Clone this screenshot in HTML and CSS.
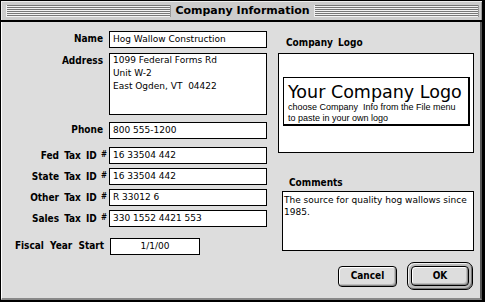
FILE: index.html
```html
<!DOCTYPE html>
<html>
<head>
<meta charset="utf-8">
<link rel="stylesheet" href="styles.css">
</head>
<body>
<div class="window">
  <div class="titlebar">
    <div class="stripes"></div>
    <div class="title">Company Information</div>
    <div class="stripes"></div>
  </div>
  <div class="content">
    <div class="left">
      <div class="row">
        <div class="lbl">Name</div>
        <div class="field">Hog Wallow Construction</div>
      </div>
      <div class="row mt5">
        <div class="lbl">Address</div>
        <div class="field area">1099 Federal Forms Rd<br>Unit W-2<br>East Ogden, VT&nbsp; 04422</div>
      </div>
      <div class="row mt7">
        <div class="lbl">Phone</div>
        <div class="field">800 555-1200</div>
      </div>
      <div class="row mt8">
        <div class="lbl hash">Fed Tax ID <span class="num">#</span></div>
        <div class="field">16 33504 442</div>
      </div>
      <div class="row mt4">
        <div class="lbl hash">State Tax ID <span class="num">#</span></div>
        <div class="field">16 33504 442</div>
      </div>
      <div class="row mt4">
        <div class="lbl hash">Other Tax ID <span class="num">#</span></div>
        <div class="field">R 33012 6</div>
      </div>
      <div class="row mt4">
        <div class="lbl hash">Sales Tax ID <span class="num">#</span></div>
        <div class="field">330 1552 4421 553</div>
      </div>
      <div class="row mt11 fiscal">
        <div class="lbl">Fiscal Year Start</div>
        <div class="field date">1/1/00</div>
      </div>
    </div>
    <div class="right">
      <div class="sect-label logo-label">Company Logo</div>
      <div class="logo-box">
        <div class="logo-card">
          <div class="logo-big">Your Company Logo</div>
          <div class="logo-small">choose Company&nbsp; Info from the File menu<br>to paste in your own logo</div>
        </div>
      </div>
      <div class="sect-label comments-label">Comments</div>
      <div class="comments">The source for quality hog wallows since 1985.</div>
      <div class="buttons">
        <div class="btn cancel">Cancel</div>
        <div class="ring"><div class="btn ok">OK</div></div>
      </div>
    </div>
  </div>
</div>
</body>
</html>
```
FILE: styles.css
```css
* { box-sizing: border-box; }
html, body { margin: 0; padding: 0; background: #000; }

.window {
  width: 485px;
  height: 302px;
  border-left: 1px solid #000;
  border-top: 1px solid #000;
  border-right: 3px solid #000;
  border-bottom: 2px solid #000;
  background: #dddddd;
  display: flex;
  flex-direction: column;
  overflow: hidden;
}

.titlebar {
  height: 21px;
  flex: none;
  border-bottom: 2px solid #000;
  background: #cccccc;
  box-shadow: inset 1px 1px 0 #eeeeee, inset -1px 0 0 #999999;
  display: flex;
  align-items: center;
  padding: 0 3px 0 5px;
}
.stripes {
  flex: 1;
  height: 12px;
  margin-top: 1px;
  background: repeating-linear-gradient(to bottom, #777777 0 1px, #f2f2f2 1px 2px);
  box-shadow: inset 1px 0 0 #eeeeee, inset -1px 0 0 #999999;
}
.title {
  padding: 0 4px;
  font-family: "DejaVu Sans", sans-serif;
  font-weight: bold;
  font-size: 11px;
  line-height: 14px;
  color: #000;
}

.content {
  flex: 1;
  display: flex;
  border-left: 1px solid #ffffff;
  border-right: 2px solid #555555;
  border-bottom: 2px solid #888888;
  padding-top: 9px;
}

.left {
  width: 265px;
  display: flex;
  flex-direction: column;
}
.row {
  display: flex;
  align-items: flex-start;
  column-gap: 2px;
}
.mt4 { margin-top: 4px; }
.mt5 { margin-top: 5px; }
.mt7 { margin-top: 7px; }
.mt8 { margin-top: 8px; }
.mt11 { margin-top: 11px; }

.lbl, .sect-label, .btn {
  font-family: "DejaVu Sans Condensed", "DejaVu Sans", sans-serif;
  font-stretch: condensed;
  font-weight: bold;
  font-size: 10px;
  line-height: 12px;
  word-spacing: 2px;
  color: #000;
  white-space: nowrap;
}
.lbl {
  width: 105px;
  flex: none;
  text-align: right;
  padding-right: 4px;
  padding-top: 2px;
}
.lbl.hash { padding-right: 0; }
.num {
  font-size: 8px;
  vertical-align: 2px;
  margin-left: -1px;
}

.field {
  width: 158px;
  height: 17px;
  flex: none;
  border: 1px solid #000;
  background: #fff;
  padding: 0 3px;
  font-family: "DejaVu Sans", sans-serif;
  font-size: 9px;
  line-height: 15px;
  color: #000;
  white-space: nowrap;
  overflow: hidden;
}
.field.area {
  height: 62px;
  line-height: 13px;
}
.fiscal .lbl { padding-right: 3px; word-spacing: 3px; }
.fiscal { column-gap: 3px; }
.field.date {
  width: 90px;
  text-align: center;
}

.right {
  margin-left: 11px;
  width: 198px;
  display: flex;
  flex-direction: column;
}
.sect-label { word-spacing: 2px; }
.logo-label {
  margin-left: 8px;
  margin-top: 6px;
}
.logo-box {
  margin-top: 4px;
  width: 196px;
  height: 100px;
  border: 1px solid #000;
  background: #fff;
  padding: 23px 0 0 4px;
}
.logo-card {
  width: 187px;
  height: 49px;
  border: 1px solid #000;
  border-right-width: 2px;
  border-bottom-width: 2px;
  padding: 4px 0 0 4px;
  color: #000;
}
.logo-big {
  font-family: "DejaVu Sans", sans-serif;
  font-size: 17.5px;
  line-height: 20px;
  white-space: nowrap;
}
.logo-small {
  font-family: "Liberation Sans", Arial, sans-serif;
  font-size: 9px;
  line-height: 11px;
  white-space: nowrap;
}

.comments-label {
  margin-left: 11px;
  margin-top: 24px;
}
.comments {
  margin-top: 2px;
  margin-left: 4px;
  width: 192px;
  height: 60px;
  border: 1px solid #000;
  background: #fff;
  padding: 2px 1px 0 1px;
  font-family: "DejaVu Sans", sans-serif;
  font-size: 9px;
  line-height: 12px;
  color: #000;
}

.buttons {
  margin-top: 11px;
  display: flex;
  align-items: center;
  column-gap: 10px;
  padding-left: 60px;
}
.btn {
  border: 1px solid #000;
  border-radius: 4px;
  background: #dddddd;
  box-shadow: inset 1px 1px 0 #ffffff, inset -1px -1px 0 #888888, inset -2px -2px 0 #bbbbbb;
  display: flex;
  align-items: center;
  justify-content: center;
  word-spacing: 0;
}
.btn.cancel {
  width: 59px;
  height: 21px;
}
.ring {
  width: 66px;
  height: 28px;
  border: 1px solid #000;
  border-radius: 7px;
  padding: 3px;
  background: #bbbbbb;
  box-shadow: inset 1px 1px 0 #f0f0f0, inset -1px -1px 0 #777777;
}
.btn.ok {
  width: 100%;
  height: 100%;
}
```
